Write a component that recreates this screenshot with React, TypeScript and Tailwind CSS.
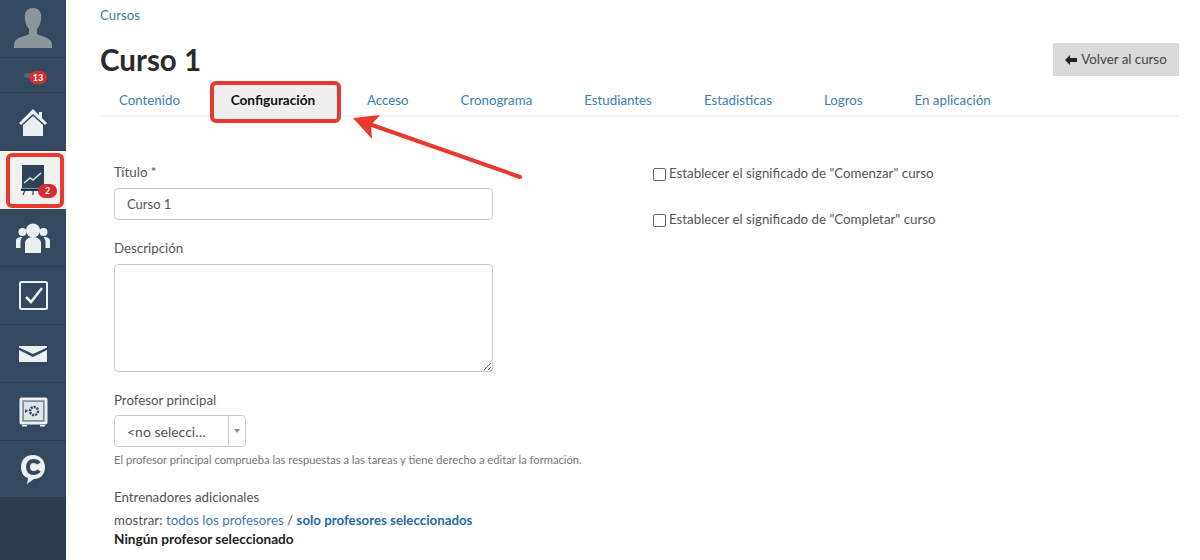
import type { ReactNode } from 'react'

const TABS = ['Contenido', 'Configuración', 'Acceso', 'Cronograma', 'Estudiantes', 'Estadisticas', 'Logros', 'En aplicación']

function NavRow({ children, className = '' }: { children: ReactNode; className?: string }) {
  return (
    <div className={`relative flex items-center justify-center border-b border-[#2a3b4e] ${className}`}>
      {children}
    </div>
  )
}

function Badge({ value, className }: { value: string; className: string }) {
  return (
    <span className={`absolute flex h-[13px] items-center justify-center rounded-full bg-[#d32f2f] text-[9px] font-bold text-white ${className}`}>
      {value}
    </span>
  )
}

function Sidebar() {
  return (
    <aside className="flex h-[560px] w-[66px] shrink-0 flex-col bg-[#2c3b4d]">
      <NavRow className="h-[58px] bg-[#34495f]">
        <svg width="46" height="50" viewBox="0 0 46 50" className="mt-[-6px]">
          <path d="M23 7c-7 0-9 5-8 12 .5 4 2 7 4 9v5c-3 2-11 3-14 7-1 2-1 5-1 7h38c0-2 0-5-1-7-3-4-11-5-14-7v-5c2-2 3.500-5 4-9 1-7-1-12-8-12z" fill="#8d949c" />
        </svg>
      </NavRow>
      <NavRow className="h-[35px] bg-[#34495f]">
        <span className="absolute left-[24px] top-[15px] h-[5px] w-[12px] rounded-full bg-[#4d6480]" />
        <Badge value="13" className="left-[29px] top-[13px] w-[18px]" />
      </NavRow>
      <NavRow className="h-[58px] bg-[#34495f]">
        <svg width="30" height="30" viewBox="0 0 30 30">
          <path d="M15 2 1 16l2 2L15 7l12 11 2-2-5-5V5h-3v3z" fill="#edf0f1" />
          <path d="M5 18 15 9l10 9v11H5z" fill="#edf0f1" />
        </svg>
      </NavRow>
      <div className="relative flex h-[58px] items-center justify-center bg-[#f1f1f1]">
        <div className="absolute left-[6px] top-[2px] h-[55px] w-[58px] rounded-[6px] border-[4px] border-[#e8392f]" />
        <svg width="24" height="32" viewBox="0 0 24 32" className="mt-[-1px]">
          <rect x="1" y="1" width="22" height="23" fill="#2f4358" />
          <path d="M3 19l6-5 3 2 8-7" stroke="#dfe5ea" strokeWidth="1.500" fill="none" />
          <path d="M0 25h24v1.500H0zM4 26l-2 5M20 26l2 5M12 26v5" stroke="#2f4358" strokeWidth="1.200" />
        </svg>
        <Badge value="2" className="left-[38px] top-[33px] h-[14px] w-[19px]" />
      </div>
      <NavRow className="h-[58px] bg-[#34495f]">
        <svg width="34" height="30" viewBox="0 0 34 30">
          <circle cx="17" cy="7.500" r="7" fill="#edf0f1" />
          <circle cx="6.500" cy="9" r="4" fill="#edf0f1" />
          <circle cx="27.500" cy="9" r="4" fill="#edf0f1" />
          <path d="M9 30V20c0-3 3-6 8-6s8 3 8 6v10z" fill="#edf0f1" />
          <path d="M0 25v-7c0-3 2-4 6.500-4-1 1-2 3-2 5v6zM34 25v-7c0-3-2-4-6.500-4 1 1 2 3 2 5v6z" fill="#edf0f1" />
        </svg>
      </NavRow>
      <NavRow className="h-[58px] bg-[#34495f]">
        <svg width="29" height="29" viewBox="0 0 29 29">
          <rect x="1" y="1" width="27" height="27" rx="1.500" fill="none" stroke="#edf0f1" strokeWidth="2" />
          <path d="m7 16 5 5L23 7" fill="none" stroke="#edf0f1" strokeWidth="2.500" />
        </svg>
      </NavRow>
      <NavRow className="h-[58px] bg-[#34495f]">
        <svg width="28" height="16" viewBox="0 0 28 16">
          <path d="M0 1.500 14 8 28 1.500V0H0zM0 4v12h28V4L14 11z" fill="#edf0f1" />
        </svg>
      </NavRow>
      <NavRow className="h-[58px] bg-[#34495f]">
        <svg width="29" height="30" viewBox="0 0 29 30">
          <rect x="0.500" y="0.500" width="28" height="27" rx="2" fill="#edf0f1" />
          <rect x="3.500" y="3.500" width="22" height="21" fill="#7f8e9e" stroke="#9aa6b2" />
          <rect x="5" y="5" width="19" height="18" fill="#dfe4e8" />
          <circle cx="15" cy="14" r="4" fill="none" stroke="#34495f" strokeWidth="2.500" strokeDasharray="2 1" />
          <path d="m6 12 3 2-3 2z" fill="#34495f" />
          <path d="M3 28h5v1.500H3zM21 28h5v1.500h-5z" fill="#edf0f1" />
        </svg>
      </NavRow>
      <div className="flex h-[56px] items-center justify-center bg-[#34495f]">
        <svg width="26" height="30" viewBox="0 0 26 30">
          <path d="M13 1C5 1 1 6 1 13c0 6 3 10 7 11l-1 6 7-5c7 0 11-5 11-12S20 1 13 1z" fill="#edf0f1" />
          <path d="M19 9.500C18 8 16 7 13.500 7 10 7 8 9.500 8 13s2 6 5.500 6c2.500 0 4.500-1 5.500-2.500" fill="none" stroke="#34495f" strokeWidth="4" />
        </svg>
      </div>
    </aside>
  )
}

export default function App() {
  return (
    <div className="relative flex h-[560px] w-[1200px] overflow-hidden bg-white font-['Lato',sans-serif] text-[13.3px] text-[#555]">
      <Sidebar />
      <main className="w-[1113px] pl-[34px]">
        <a className="mt-[7px] block leading-[16px] text-[#3f78ad]">Cursos</a>

        <div className="mt-[19px] flex items-start justify-between">
          <h1 className="text-[29.5px] font-bold leading-[36px] text-[#2b2b2b]">Curso 1</h1>
          <button className="mt-[1px] flex h-[33px] w-[126px] items-center justify-center gap-[4px] bg-[#d9d9d9] text-[13.3px] text-[#444]">
            <svg width="12" height="10" viewBox="0 0 12 10">
              <path d="M0 5 5 0v3h7v4H5v3z" fill="#222" />
            </svg>
            Volver al curso
          </button>
        </div>

        <nav className="mt-[3px] flex h-[36px] border-b-2 border-[#f3f3f3]">
          {TABS.map((tab, i) => (
            <div
              key={tab}
              className={
                i === 1
                  ? 'relative z-10 flex h-[42px] w-[131px] items-center justify-center rounded-[6px] border-[4px] border-[#e8392f] bg-[#efefef] pb-[3px] pr-[5px] text-[13.6px] font-bold text-[#111]'
                  : 'flex h-[34px] items-center pt-[6px] text-[#3b7fb5]'
              }
              style={i === 1 ? undefined : { marginLeft: [19, 0, 26, 52, 52, 52, 52, 52][i], marginRight: i === 0 ? 30 : 0 }}
            >
              {tab}
            </div>
          ))}
        </nav>

        <div className="mt-[46px] flex">
          <section className="w-[553px] pl-[14px]">
            <label className="block leading-[18px]">Título *</label>
            <input readOnly value="Curso 1" className="mt-[7px] block h-[32px] w-[379px] rounded-[4px] border border-[#ccc] px-[12px] text-[13px] text-[#555]" />

            <label className="mt-[19px] block leading-[18px]">Descripción</label>
            <textarea readOnly className="mt-[7px] block h-[108px] w-[379px] rounded-[4px] border border-[#ccc]" />

            <label className="mt-[19px] block leading-[18px]">Profesor principal</label>
            <div className="mt-[6px] flex h-[32px] w-[132px] rounded-[4px] border border-[#ccc]">
              <span className="flex flex-1 items-center pl-[12px] text-[14px] text-[#555]">&lt;no selecci…</span>
              <span className="flex w-[17px] items-center justify-center border-l border-[#ccc]">
                <span className="h-0 w-0 border-x-[3px] border-t-[4px] border-x-transparent border-t-[#888]" />
              </span>
            </div>
            <p className="mt-[6px] text-[11.2px] leading-[14px] text-[#777]">
              El profesor principal comprueba las respuestas a las tareas y tiene derecho a editar la formación.
            </p>

            <label className="mt-[21px] block leading-[18px]">Entrenadores adicionales</label>
            <p className="mt-[5px] leading-[18px]">
              mostrar: <a className="text-[#3f78ad]">todos los profesores</a> / <a className="font-bold text-[#1f6aa5]">solo profesores seleccionados</a>
            </p>
            <p className="mt-[1px] text-[13.6px] font-bold leading-[18px] text-[#222]">Ningún profesor seleccionado</p>
          </section>

          <section className="flex flex-col gap-[28px] pt-[2px]">
            <label className="flex h-[18px] items-center gap-[3px]">
              <span className="h-[13px] w-[13px] rounded-[2px] border border-[#666] bg-white" />
              Establecer el significado de "Comenzar" curso
            </label>
            <label className="flex h-[18px] items-center gap-[3px]">
              <span className="h-[13px] w-[13px] rounded-[2px] border border-[#666] bg-white" />
              Establecer el significado de "Completar" curso
            </label>
          </section>
        </div>
      </main>

      {/* flecha roja de la anotación */}
      <svg className="pointer-events-none absolute left-[345px] top-[110px] z-20" width="185" height="75" viewBox="0 0 185 75">
        <path d="M175 67 27 15" stroke="#e8392f" strokeWidth="4" strokeLinecap="round" fill="none" />
        <path d="M8 8 35 5 26 15 27 29z" fill="#e8392f" />
      </svg>
    </div>
  )
}
